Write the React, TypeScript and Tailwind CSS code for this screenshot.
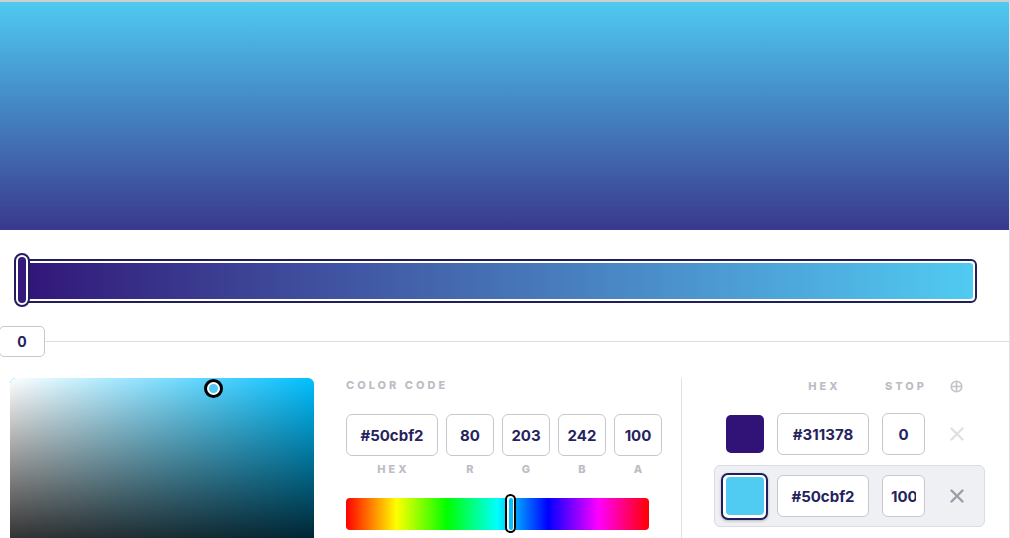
import React from 'react';

const NAVY = 'text-[#25235e]';

const Label: React.FC<{ children: React.ReactNode; className?: string }> = ({ children, className = '' }) => (
  <div className={`text-[11px] leading-[14px] font-extrabold tracking-[3px] text-[#bdbdc5] uppercase ${className}`}>{children}</div>
);

const Field: React.FC<{ value: string; w: string; h?: string }> = ({ value, w, h = 'h-[42px]' }) => (
  <input
    readOnly
    defaultValue={value}
    className={`${w} ${h} rounded-[6px] border border-[#c7c7cf] bg-white px-[8px] text-center text-[15px] font-bold ${NAVY} outline-none`}
  />
);

const Cross: React.FC<{ color: string }> = ({ color }) => (
  <svg width="14" height="14" viewBox="0 0 14 14" className={color}>
    <path d="M1.5 1.5 L12.5 12.5 M12.5 1.5 L1.5 12.5" stroke="currentColor" strokeWidth="2.4" strokeLinecap="round" />
  </svg>
);

const App: React.FC = () => {
  const codes = [
    { label: 'HEX', value: '#50cbf2', w: 'w-[92px]' },
    { label: 'R', value: '80', w: 'w-[48px]' },
    { label: 'G', value: '203', w: 'w-[48px]' },
    { label: 'B', value: '242', w: 'w-[48px]' },
    { label: 'A', value: '100', w: 'w-[48px]' },
  ];

  return (
    <div className="w-[1010px] h-[538px] overflow-hidden border-t-2 border-t-[#cfcfd2] border-r border-r-[#e3e3e6] bg-white font-['Inter',sans-serif]">
      {/* preview */}
      <div className="h-[228px] bg-linear-to-b from-[#4fcaf1] via-[#4488c5] via-45% to-[#39388d]" />

      {/* gradient bar */}
      <div className="relative pt-[29px]">
        <div className="ml-[16px] w-[961px] h-[44px] rounded-[6px] border-2 border-[#201e5c] bg-white p-[2px]">
          <div className="h-full rounded-[3px] bg-linear-to-r from-[#311378] to-[#50cbf2]" />
        </div>
        <div className="absolute left-[14px] top-[23px] w-[16px] h-[54px] rounded-full border-2 border-[#201e5c] bg-white p-[2px]">
          <div className="h-full rounded-full bg-[#331a7c]" />
        </div>
      </div>

      {/* stop marker */}
      <div className="mt-[23px] flex items-center">
        <div className={`-ml-px w-[46px] h-[31px] rounded-[5px] border border-[#c7c7cf] flex items-center justify-center text-[14px] font-bold ${NAVY}`}>0</div>
        <div className="flex-1 h-px bg-[#dedee2]" />
      </div>

      {/* editor */}
      <div className="flex items-start">
        {/* saturation picker */}
        <div className="relative ml-[10px] mt-[21px] w-[304px] h-[200px] rounded-[6px] bg-[#00bfff] overflow-hidden">
          <div className="absolute inset-0 bg-linear-to-r from-white to-white/0" />
          <div className="absolute inset-0 bg-linear-to-b from-black/0 to-black" />
          <div className="absolute left-[194px] top-[1px] w-[19px] h-[19px] rounded-full border-[3px] border-black bg-white p-[2px]">
            <div className="w-full h-full rounded-full bg-[#50cbf2]" />
          </div>
        </div>

        {/* colour code */}
        <div className="ml-[32px] mt-[21px] w-[316px]">
          <Label>Color code</Label>
          <div className="mt-[22px] flex gap-[8px]">
            {codes.map((c) => (
              <div key={c.label} className="flex flex-col items-center">
                <Field value={c.value} w={c.w} />
                <Label className="mt-[6px] pl-[3px]">{c.label}</Label>
              </div>
            ))}
          </div>
          <div className="relative mt-[22px] w-[303px] h-[32px] rounded-[4px] bg-[linear-gradient(to_right,#f00,#ff0,#0f0,#0ff,#00f,#f0f,#f00)]">
            <div className="absolute left-[159px] top-[-4px] w-[11px] h-[39px] rounded-full border-2 border-black bg-white p-[1.5px]">
              <div className="w-full h-full rounded-full bg-[#00bfff]" />
            </div>
          </div>
        </div>

        {/* stops list */}
        <div className="ml-[19px] mt-[21px] h-[200px] border-l border-[#e3e3e6] pl-[32px]">
          <div className="flex items-center h-[14px] mt-px pl-[7px]">
            <div className="w-[47px]" />
            <Label className="ml-[9px] w-[92px] text-center pl-[3px]">Hex</Label>
            <Label className="ml-[13px] w-[43px] text-center pl-[3px]">Stop</Label>
            <svg width="13" height="13" viewBox="0 0 13 13" className="ml-[25px] text-[#c3c3ca]">
              <circle cx="6.5" cy="6.5" r="5.3" fill="none" stroke="currentColor" strokeWidth="1.6" />
              <path d="M6.5 1.2 V11.8 M1.2 6.5 H11.8" stroke="currentColor" strokeWidth="1.6" />
            </svg>
          </div>

          <div className="mt-[10px] flex items-center h-[62px] w-[271px] rounded-[6px] border border-transparent px-[6px]">
            <div className="w-[47px] flex justify-center">
              <div className="w-[38px] h-[38px] rounded-[5px] bg-[#311378]" />
            </div>
            <div className="ml-[9px]"><Field value="#311378" w="w-[92px]" /></div>
            <div className="ml-[13px]"><Field value="0" w="w-[43px]" /></div>
            <div className="ml-[25px]"><Cross color="text-[#dfdfe6]" /></div>
          </div>

          <div className="flex items-center h-[62px] w-[271px] rounded-[6px] border border-[#dcdde2] bg-[#eff0f3] px-[6px]">
            <div className="w-[47px] h-[47px] rounded-[7px] border-2 border-[#201e5c] bg-white p-[2.5px] shadow-[0_1px_3px_rgba(0,0,0,0.25)]">
              <div className="w-full h-full rounded-[4px] bg-[#50cbf2]" />
            </div>
            <div className="ml-[9px]"><Field value="#50cbf2" w="w-[92px]" /></div>
            <div className="ml-[13px]"><Field value="100" w="w-[43px]" /></div>
            <div className="ml-[25px]"><Cross color="text-[#9d9daa]" /></div>
          </div>
        </div>
      </div>
    </div>
  );
};

export default App;
